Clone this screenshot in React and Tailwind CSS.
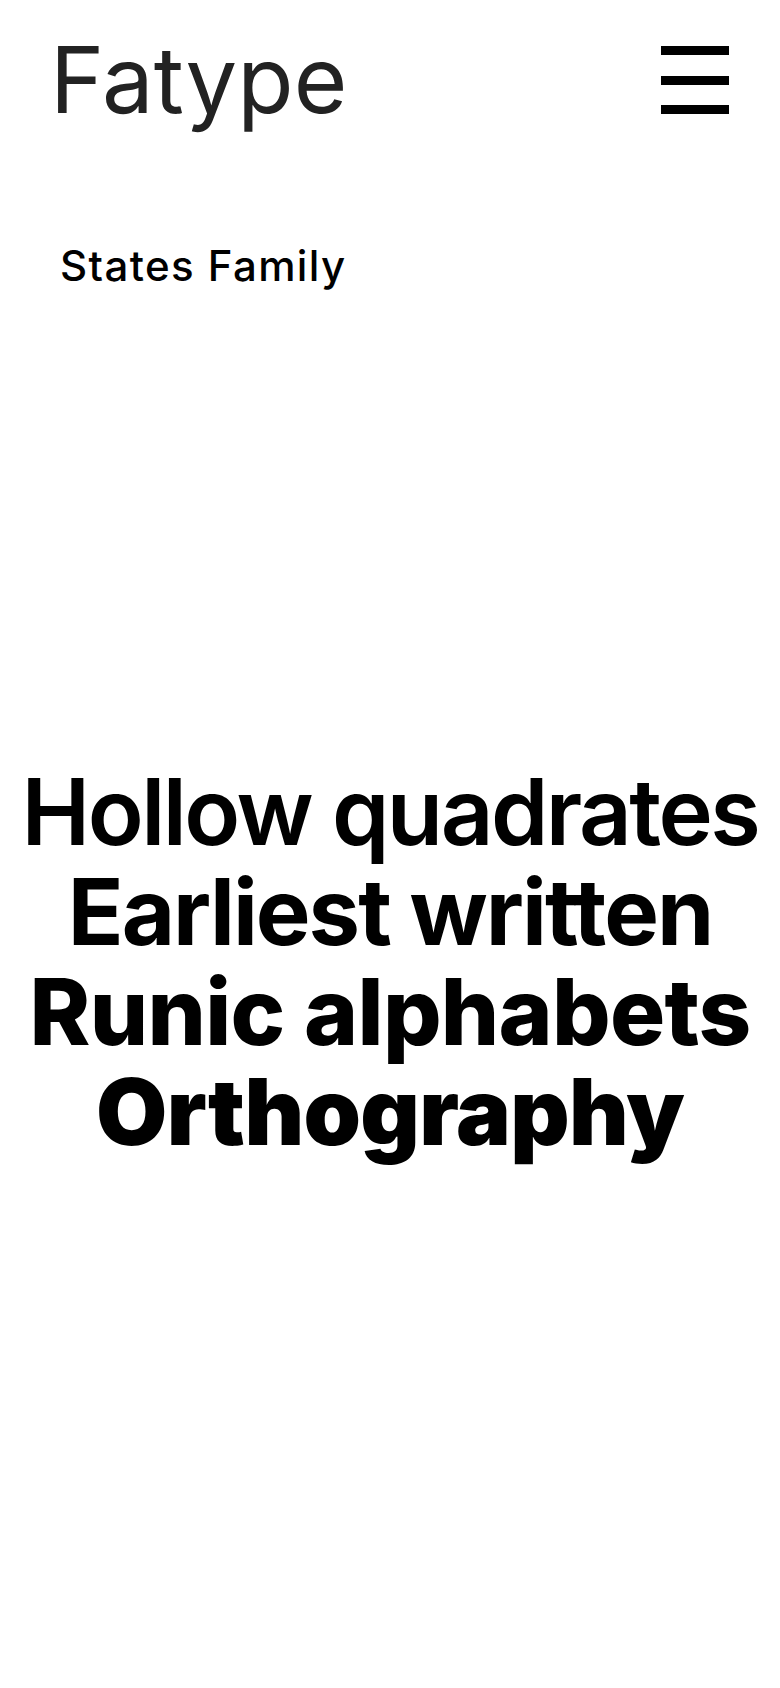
export default function App() {
  return (
    <div
      className="min-h-[1688px] w-full bg-white"
      style={{ fontFamily: "Inter, 'Noto Sans', sans-serif" }}
    >
      <header className="flex items-start justify-between pl-[50px] pr-[51px] pt-[34px]">
        <div className="text-[92px] font-normal leading-none text-[#222222]">Fatype</div>
        <button className="mt-[12px] flex w-[68px] flex-col gap-[20.5px]" aria-label="Menu">
          <span className="block h-[9px] w-full bg-black" />
          <span className="block h-[9px] w-full bg-black" />
          <span className="block h-[9px] w-full bg-black" />
        </button>
      </header>
      <div className="mt-[119px] pl-[60px] text-[42px] font-medium leading-none tracking-[1.4px] text-black">
        States Family
      </div>
      <div className="mt-[475px] text-center text-[92px] leading-[100px] text-black">
        <div className="font-semibold tracking-[-2.5px]">Hollow quadrates</div>
        <div className="font-bold tracking-[-2px]">Earliest written</div>
        <div className="font-extrabold tracking-[-0.7px]">Runic alphabets</div>
        <div className="font-black tracking-[-0.7px]">Orthography</div>
      </div>
    </div>
  );
}
